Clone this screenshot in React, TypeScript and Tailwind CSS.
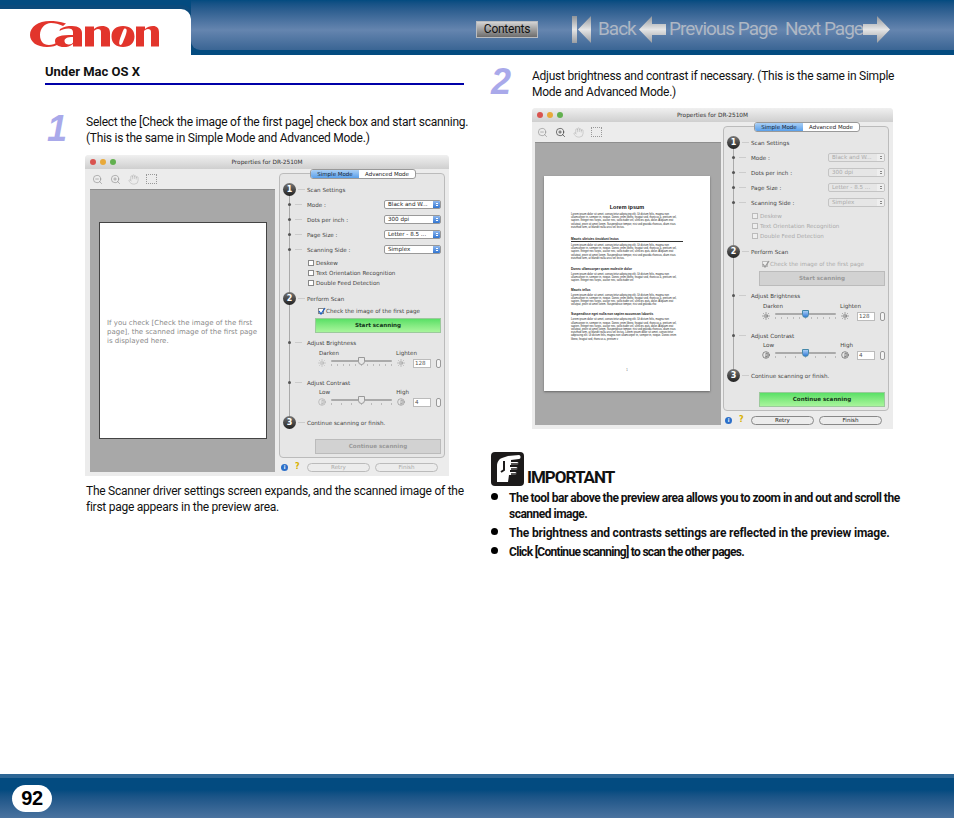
import { Contrast, Hand, Sun, ZoomIn, ZoomOut } from "lucide-react";

function CanonLogo() {
  return (
    <svg width="129" height="27" viewBox="0 0 129 27" fill="#e2352c" fillRule="evenodd">
      <path d="M36 2.500C30 .3 24 0 20 0 8 0 0 6 0 14c0 7 7 12 17 12 5 0 9-1 13-4l-2-1c-3 2-6 3-9 3-6 0-9-4-9-10 0-7 5-12 11-12 4 0 8 1 12 3z" />
      <path d="M30 8c4-2.500 8-3 12-3 7 0 10 3 10 7v13.500h-9V23c-3 2.500-6 3-9 3-6 0-9-2.500-9-6 0-5 6-6 18-6v-3c0-2.500-2-3.500-4.500-3.500-3.500 0-6.500 1-9 2.500zM43 16c-6 0-8.500 1.500-8.500 4 0 2.500 2.500 3.500 4.500 3.500s3.500-1 4-2z" />
      <path d="M55 5.500h9V8c2-2 5-3 8-3 5 0 8 2 8 7v13.500h-9V11c0-2-1-3-3-3s-3 1-4 2v15.500h-9z" />
      <path d="M93 5c7 0 11.500 4 11.500 10.500S100 26 93 26s-11.500-4-11.500-10.500S86 5 93 5zM95 7.500c2.500 0 2 3.500 0 8.500s-3 8-4.500 8c-2 0-1.500-4 .5-9s2.500-7.500 4-7.500z" />
      <path d="M106 5.500h9V8c2-2 5-3 8-3 4 0 6 2 6 7v13.500h-8V11c0-2-1-3-3-3s-3 1-4 2v15.500h-8z" />
    </svg>
  );
}

function NavIcon({ kind }: { kind: "first" | "prev" | "next" }) {
  const id = "navfill-" + kind;
  return (
    <svg width={kind === "first" ? 20 : 27} height="27" viewBox={kind === "first" ? "0 0 20 27" : "0 0 27 27"} className="shrink-0">
      <defs>
        <linearGradient id={id} x1="0" y1="0" x2="0" y2="1">
          <stop offset="0" stopColor="#8f949a" />
          <stop offset="0.5" stopColor="#e6e6e6" />
          <stop offset="1" stopColor="#9b9ea3" />
        </linearGradient>
      </defs>
      {kind === "first" && <path d="M0 0h5v27H0zM19 0v27L6 13.500z" fill={"url(#" + id + ")"} />}
      {kind === "prev" && <path d="M13 0v8h14v11H13v8L0 13.500z" fill={"url(#" + id + ")"} />}
      {kind === "next" && <path d="M14 0v8H0v11h14v8l13-13.500z" fill={"url(#" + id + ")"} />}
    </svg>
  );
}

function Header() {
  return (
    <header className="h-[55px] shrink-0 flex bg-[#034b80]">
      <div className="w-[195px] pt-[5px] shrink-0">
        <div className="h-[50px] bg-white border-t-[4px] border-r-[4px] border-[#0b4a7c] rounded-tr-[14px] pt-[12px] pl-[30px]">
          <CanonLogo />
        </div>
      </div>
      <div className="flex-1 flex flex-col -ml-[4px]">
        <div className="h-[50px] rounded-bl-[9px] bg-gradient-to-b from-[#034b80] via-[#6585af] via-60% to-[#3a6594] flex items-center pl-[285px]">
          <button className="w-[62px] h-[17px] border border-[#b9bcc0] bg-gradient-to-b from-[#d4d4d4] to-[#6d6d6d] text-[12px] leading-[15px] text-[#111] mt-[9px]">
            Contents
          </button>
          <div className="ml-[34px] flex items-center mt-[8px] text-[19px] tracking-[-1px] whitespace-nowrap text-[#aeb7c4]">
            <NavIcon kind="first" />
            <span className="ml-[6px] w-[41px]">Back</span>
            <NavIcon kind="prev" />
            <span className="ml-[3px] w-[116px]">Previous Page</span>
            <span className="w-[78px]">Next Page</span>
            <NavIcon kind="next" />
          </div>
        </div>
        <div className="h-[5px] bg-[#034b80]" />
      </div>
    </header>
  );
}

function StepBadge({ n }: { n: number }) {
  return (
    <span className="relative z-10 w-[13px] h-[13px] rounded-full bg-gradient-to-b from-[#777] to-[#222] text-white text-[8px] leading-[13px] font-bold text-center font-['DejaVu_Sans',sans-serif]">
      {n}
    </span>
  );
}

function StepRow({ n, label }: { n: number; label: string }) {
  return (
    <div className="h-[15px] flex items-center pl-[3px]">
      <StepBadge n={n} />
      <span className="w-[7px] h-px bg-[#ccc] ml-[2px] mr-[2px]" />
      <span>{label}</span>
    </div>
  );
}

function DotRow({ label, children }: { label: string; children?: React.ReactNode }) {
  return (
    <div className="h-[15px] flex items-center pl-[8px] pr-[3px]">
      <span className="relative z-10 w-[3px] h-[3px] rounded-full bg-[#555]" />
      <span className="w-[7px] h-px bg-[#ccc] ml-[4px] mr-[5px]" />
      <span className="flex-1">{label}</span>
      {children}
    </div>
  );
}

function Select({ value, on }: { value: string; on: boolean }) {
  return (
    <span className={on ? "w-[57px] h-[9px] flex rounded-[2px] border border-[#999] bg-white text-[#222] leading-[7px] overflow-hidden" : "w-[57px] h-[9px] flex rounded-[2px] border border-[#c4c4c4] bg-[#e6e6e6] text-[#aaa] leading-[7px] overflow-hidden"}>
      <span className="flex-1 pl-[3px] whitespace-nowrap overflow-hidden">{value}</span>
      <span className={on ? "w-[7px] flex flex-col items-center justify-center gap-px bg-gradient-to-b from-[#8fb8ee] to-[#2f74d0]" : "w-[7px] flex flex-col items-center justify-center gap-px bg-[#eee]"}>
        <span className={on ? "w-[2px] h-px bg-white" : "w-[2px] h-px bg-[#888]"} />
        <span className={on ? "w-[2px] h-px bg-white" : "w-[2px] h-px bg-[#888]"} />
      </span>
    </span>
  );
}

function Check({ label, on, checked }: { label: string; on: boolean; checked?: boolean }) {
  return (
    <div className={on ? "h-[10px] flex items-center text-[#444]" : "h-[10px] flex items-center text-[#aaa]"}>
      <span className={on ? "relative w-[6px] h-[6px] border border-[#888] bg-white mr-[2px]" : "relative w-[6px] h-[6px] border border-[#bbb] bg-[#eee] mr-[2px]"}>
        {checked && (
          <svg className="absolute -top-[2px] -left-[1px]" width="8" height="8" viewBox="0 0 8 8">
            <path d="M1 4l2 3 4-6" fill="none" stroke={on ? "#1f5fbf" : "#999"} strokeWidth="1.300" />
          </svg>
        )}
      </span>
      {label}
    </div>
  );
}

function ActionButton({ label, green }: { label: string; green: boolean }) {
  return (
    <div className={green
      ? "ml-[35px] w-[126px] h-[15px] border border-[#9cc99c] bg-gradient-to-b from-[#58e066] to-[#a8f59c] text-center leading-[13px] font-bold text-[#14361a]"
      : "ml-[35px] w-[126px] h-[15px] border border-[#bbb] bg-[#d2d2d2] text-center leading-[13px] font-bold text-[#999]"}>
      {label}
    </div>
  );
}

function Slider({ ticks, value, blue, icon }: { ticks: number; value: string; blue: boolean; icon: "sun" | "contrast" }) {
  const Icon = icon === "sun" ? Sun : Contrast;
  return (
    <div className="h-[10px] flex items-center pl-[38px]">
      <Icon size={8} strokeWidth={1.500} className={blue ? "text-[#333]" : "text-[#999]"} />
      <div className="relative w-[61px] mx-[5px]">
        <div className="h-[2px] rounded-full bg-[#aaa]" />
        <div className="flex justify-between mt-[2px] h-[2px]">
          {Array.from({ length: ticks }).map((_, i) => (
            <span key={i} className="w-px h-[2px] bg-[#bbb]" />
          ))}
        </div>
        <span className={blue
          ? "absolute left-[27px] -top-[3px] w-[7px] h-[8px] rounded-b-[4px] border border-[#48a] bg-gradient-to-b from-[#a8cdf5] to-[#2f79d6]"
          : "absolute left-[27px] -top-[3px] w-[7px] h-[8px] rounded-b-[4px] border border-[#999] bg-[#e8e8e8]"} />
      </div>
      <Icon size={8} strokeWidth={1.500} className={blue ? "text-[#333]" : "text-[#777]"} />
      <span className="ml-[8px] w-[18px] h-[9px] border border-[#bbb] bg-white text-[#555] leading-[7px] pl-[1px]">{value}</span>
      <span className="ml-[5px] w-[5px] h-[9px] rounded-[2px] border border-[#999] bg-[#f5f5f5]" />
    </div>
  );
}

function SettingsPanel({ stage }: { stage: 1 | 2 }) {
  const first = stage === 1;
  return (
    <div className="w-[166px] shrink-0 pt-[4px] font-['DejaVu_Sans',sans-serif] text-[5.6px] text-[#444]">
      <div className="relative h-[285px] rounded-[4px] border border-[#bbb] bg-[#e6e6e6] pt-[8px]">
        <div className="absolute left-[9px] top-[20px] w-px h-[225px] bg-[#aaa]" />
        <div className="absolute -top-[5px] left-[30px] h-[10px] flex rounded-[3px] border border-[#999] bg-white text-[5.5px] leading-[8px] overflow-hidden">
          <span className="w-[48px] text-center bg-gradient-to-b from-[#a9cff5] to-[#5aa0ea] text-[#123]">Simple Mode</span>
          <span className="w-[56px] text-center text-[#222]">Advanced Mode</span>
        </div>
        <StepRow n={1} label="Scan Settings" />
        <DotRow label="Mode :"><Select value="Black and W..." on={first} /></DotRow>
        <DotRow label="Dots per inch :"><Select value="300 dpi" on={first} /></DotRow>
        <DotRow label="Page Size :"><Select value="Letter - 8.5 ..." on={first} /></DotRow>
        <DotRow label="Scanning Side :"><Select value="Simplex" on={first} /></DotRow>
        <div className="pl-[28px] mt-px">
          <Check label="Deskew" on={first} />
          <Check label="Text Orientation Recognition" on={first} />
          <Check label="Double Feed Detection" on={first} />
        </div>
        <div className="mt-[3px]"><StepRow n={2} label="Perform Scan" /></div>
        <div className="pl-[38px]"><Check label="Check the image of the first page" on={first} checked /></div>
        <div className="mt-[2px]"><ActionButton label="Start scanning" green={first} /></div>
        <div className="mt-[2px] h-[11px]"><DotRow label="Adjust Brightness" /></div>
        <div className="h-[10px] flex justify-between pl-[39px] pr-[27px] leading-[10px] mt-[2px]"><span>Darken</span><span>Lighten</span></div>
        <Slider ticks={11} value="128" blue={!first} icon="sun" />
        <div className="mt-[7px] h-[11px]"><DotRow label="Adjust Contrast" /></div>
        <div className="h-[10px] flex justify-between pl-[39px] pr-[35px] leading-[10px] mt-px"><span>Low</span><span>High</span></div>
        <Slider ticks={7} value="4" blue={!first} icon="contrast" />
        <div className="mt-[8px]"><StepRow n={3} label="Continue scanning or finish." /></div>
        <div className="mt-[9px]"><ActionButton label="Continue scanning" green={!first} /></div>
      </div>
      <div className="h-[15px] flex items-center pl-[2px] pt-[3px]">
        <span className="w-[7px] h-[7px] rounded-full bg-[#2c6fc9] text-white text-[5px] leading-[7px] text-center font-bold">i</span>
        <span className="ml-[7px] w-[7px] text-[#d8b100] text-[8px] font-bold leading-[8px]">?</span>
        <span className={first ? "ml-[5px] w-[63px] h-[9px] rounded-full border border-[#bbb] text-center leading-[7px] text-[#aaa]" : "ml-[5px] w-[63px] h-[9px] rounded-full border border-[#888] text-center leading-[7px] text-[#222]"}>Retry</span>
        <span className={first ? "ml-[5px] w-[63px] h-[9px] rounded-full border border-[#bbb] text-center leading-[7px] text-[#aaa]" : "ml-[5px] w-[63px] h-[9px] rounded-full border border-[#888] text-center leading-[7px] text-[#222]"}>Finish</span>
      </div>
    </div>
  );
}

function Para({ children }: { children: string }) {
  return <p className="text-[2.7px] leading-[3.2px] text-[#222] mt-[2px]">{children}</p>;
}

const LOREM = "Lorem ipsum dolor sit amet, consectetur adipiscing elit. Ut dictum felis, magna non ullamcorper in, semper in, neque. Donec enim libero, feugiat sed, rhoncus a, pretium vel, sapien. Integer nec turpis, auctor nec, sollicitudin vel, ultricies quis, dolor. Aliquam erat volutpat, proin sit amet lorem. Suspendisse tempor, nisi sed gravida rhoncus, diam risus euismod sem, at blandit nulla arcu vel lectus.";

function SamplePage() {
  return (
    <div className="w-[166px] h-[215px] mt-[33px] ml-[9px] bg-white shadow-[0_1px_2px_#666] pt-[28px] px-[27px] font-['Liberation_Sans',sans-serif]">
      <h3 className="text-[5.5px] leading-[6px] font-bold text-center text-[#111] mb-[3px]">Lorem ipsum</h3>
      <Para>{LOREM}</Para>
      <h4 className="mt-[8px] text-[3.2px] leading-[4px] font-bold text-[#111] border-b-[0.5px] border-[#333]">Mauris ultricies tincidunt lectus</h4>
      <Para>{LOREM}</Para>
      <h4 className="mt-[7px] text-[3.2px] leading-[4px] font-bold text-[#111]">Donec ullamcorper quam molestie dolor</h4>
      <Para>{LOREM.slice(0, 230)}</Para>
      <h4 className="mt-[5px] text-[3.2px] leading-[4px] font-bold text-[#111]">Mauris tellus</h4>
      <Para>{LOREM.slice(0, 340)}</Para>
      <h4 className="mt-[6px] text-[3.2px] leading-[4px] font-bold text-[#111]">Suspendisse eget nulla non sapien accumsan lobortis</h4>
      <Para>{LOREM + " " + LOREM.slice(0, 170)}</Para>
      <p className="mt-[22px] text-[2.7px] text-center text-[#555]">1</p>
    </div>
  );
}

function ScannerWindow({ stage }: { stage: 1 | 2 }) {
  const first = stage === 1;
  return (
    <div className={first ? "w-[364px] h-[321px] rounded-t-[4px] bg-[#ececec] overflow-hidden tracking-normal" : "w-[361px] h-[321px] rounded-t-[4px] bg-[#ececec] overflow-hidden tracking-normal"}>
      <div className="relative h-[14px] flex items-center pl-[5px] gap-[4px] bg-gradient-to-b from-[#f0f0f0] to-[#cfcfcf]">
        <span className="w-[6px] h-[6px] rounded-full bg-[#d9534f]" />
        <span className="w-[6px] h-[6px] rounded-full bg-[#e8a93a]" />
        <span className="w-[6px] h-[6px] rounded-full bg-[#62b04f]" />
        <span className="absolute inset-x-0 text-center text-[5.8px] font-['DejaVu_Sans',sans-serif] text-[#333]">Properties for DR-2510M</span>
      </div>
      <div className={first ? "flex gap-[4px] pl-[5px]" : "flex gap-[2px] pl-[3px]"}>
        <div className={first ? "w-[185px] shrink-0" : "w-[186px] shrink-0"}>
          <div className="h-[20px] flex items-center gap-[7px] pl-[2px] text-[#888]">
            <ZoomOut size={11} strokeWidth={1.300} />
            <ZoomIn size={11} strokeWidth={1.300} className={first ? "text-[#888]" : "text-[#222]"} />
            <Hand size={11} strokeWidth={1} className="text-[#aaa]" />
            <span className="w-[11px] h-[10px] border border-dotted border-[#999]" />
          </div>
          <div className="h-[283px] bg-[#a8a8a8] overflow-hidden border-t border-[#8e8e8e]">
            {first ? (
              <div className="w-[168px] h-[217px] mt-[32px] ml-[9px] bg-white border border-[#444] pt-[96px] px-[7px] font-['DejaVu_Sans',sans-serif] text-[7px] leading-[8.800px] text-[#8a8a8a]">
                If you check [Check the image of the first page], the scanned image of the first page is displayed here.
              </div>
            ) : (
              <SamplePage />
            )}
          </div>
        </div>
        <SettingsPanel stage={stage} />
      </div>
    </div>
  );
}

function StepNumber({ n, top }: { n: number; top: string }) {
  return (
    <div className={"w-[41px] h-[32px] shrink-0 text-[36px] leading-[36px] font-bold italic text-[#a9a9ea] font-['Liberation_Sans',sans-serif] " + top}>
      {n}
    </div>
  );
}

function ImportantIcon() {
  return (
    <svg width="33" height="34" viewBox="0 0 33 34" className="shrink-0">
      <rect width="33" height="34" rx="4" fill="#1c1a1a" />
      <path d="M6 30V14c0-4 2-7 5-8l6-2 11-1c2 0 2 4 0 4l-8 1v2h6c2 0 2 3 0 3h-7v2h6c2 0 2 3 0 3h-6v2h5c2 0 2 3 0 3h-6l-1 7z" fill="#fff" />
      <path d="M13 9v9l-3 2" fill="none" stroke="#1c1a1a" strokeWidth="2" />
      <path d="M20 12h8M20 17h7M20 22h6" stroke="#1c1a1a" strokeWidth="1.500" />
    </svg>
  );
}

function Bullet({ children, tracking }: { children: string; tracking: string }) {
  return (
    <li className="flex">
      <span className="w-[7px] h-[7px] rounded-full bg-black mt-[3px] mr-[11px] shrink-0" />
      <span className={tracking}>{children}</span>
    </li>
  );
}

export default function App() {
  return (
    <div className="w-[954px] h-[818px] flex flex-col bg-white text-[#111] text-[12px] tracking-[-0.25px] leading-[16px] font-['Roboto','Liberation_Sans',sans-serif]">
      <Header />
      <main className="flex-1 flex">
        {/* Left column */}
        <section className="w-[491px] shrink-0 pl-[45px]">
          <h2 className="w-[419px] pt-[9px] pb-[3px] font-bold text-[13px] tracking-normal border-b-2 border-[#0000a8]">Under Mac OS X</h2>
          <div className="mt-[29px] flex">
            <StepNumber n={1} top="-mt-[3px] pl-[2px]" />
            <p className="w-[385px] shrink-0">
              Select the [Check the image of the first page] check box and start scanning. (This is the same in Simple Mode and Advanced Mode.)
            </p>
          </div>
          <div className="ml-[40px] mt-[9px]">
            <ScannerWindow stage={1} />
          </div>
          <p className="ml-[41px] mt-[7px] w-[378px]">
            The Scanner driver settings screen expands, and the scanned image of the first page appears in the preview area.
          </p>
        </section>

        {/* Right column */}
        <section className="flex-1 pt-[13px]">
          <div className="flex">
            <StepNumber n={2} top="-mt-[4px]" />
            <p className="w-[365px] h-[32px]">
              Adjust brightness and contrast if necessary. (This is the same in Simple Mode and Advanced Mode.)
            </p>
          </div>
          <div className="ml-[41px] mt-[8px]">
            <ScannerWindow stage={2} />
          </div>
          <div className="mt-[23px] flex items-end gap-[3px]">
            <ImportantIcon />
            <span className="text-[17px] leading-[18px] font-bold tracking-[-1px] text-[#111]">IMPORTANT</span>
          </div>
          <ul className="mt-[4px] flex flex-col gap-[3px] font-bold w-[413px]">
            <Bullet tracking="tracking-[-0.5px]">The tool bar above the preview area allows you to zoom in and out and scroll the scanned image.</Bullet>
            <Bullet tracking="tracking-[-0.18px]">The brightness and contrasts settings are reflected in the preview image.</Bullet>
            <Bullet tracking="tracking-[-0.7px]">Click [Continue scanning] to scan the other pages.</Bullet>
          </ul>
        </section>
      </main>
      <footer className="h-[44px] shrink-0 border-t-[4px] border-[#2d6695] bg-gradient-to-b from-[#034b80] via-[#034b80] via-30% to-[#4a739f] flex items-center pl-[12px]">
        <span className="w-[40px] h-[27px] rounded-full bg-white text-center text-[20px] leading-[27px] font-bold text-black font-['Liberation_Sans',sans-serif]">92</span>
      </footer>
    </div>
  );
}
